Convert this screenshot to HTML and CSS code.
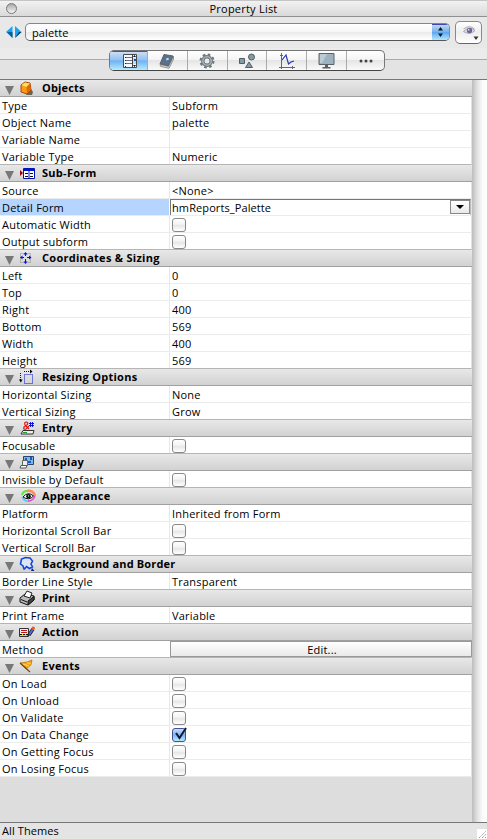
FILE: index.html
```html
<!DOCTYPE html>
<html lang="en">
<head>
<meta charset="utf-8">
<title>Property List</title>
<link rel="stylesheet" href="styles.css">
</head>
<body>
<header class="titlebar"><span class="close"></span><h1>Property List</h1></header>
<div class="selector">
  <svg class="arrows" width="16" height="12" viewBox="0 0 16 12"><path d="M6.500 0v12L0 6z" fill="#18a4f0"/><path d="M1 6h5.500v6z" fill="#075b96"/><path d="M9 0v12l6.500-6z" fill="#18a4f0"/><path d="M9 12l6.500-6H13z" fill="#063659"/></svg>
  <div class="popup"><span>palette</span><i><svg width="17" height="17" viewBox="0 0 17 17"><path d="M8.500 3l2.500 3.500H6zM8.500 13L6 9.500h5z" fill="#101820"/></svg></i></div>
  <div class="eye"><svg width="26" height="22" viewBox="0 0 26 22"><path d="M7.500 9.500q5.500-6 11.500-1-5 5-11.500 1" fill="#e8e6ec" stroke="#a5a1ad"/><circle cx="13.500" cy="8.500" r="2.700" fill="#6f6595"/><circle cx="12.700" cy="7.700" r=".9" fill="#ddd8ee"/><path d="M7.500 7q6-4.500 11 0" fill="none" stroke="#aaa"/><path d="M17.500 14.500h5l-2.500 3.500z" fill="#333"/></svg></div>
</div>
<nav class="tabs">
  <div class="segments">
    <span class="seg on"><svg width="16" height="16" viewBox="0 0 16 16"><path d="M1.500 1.500h13v13h-13z" fill="#f4f8ff" stroke="#4a4a4a"/><path d="M4 4.500h6M4 7.500h6M4 10.500h6" stroke="#6a7180"/><path d="M3 4h1v1H3zM3 7h1v1H3zM3 10h1v1H3zM3 13h1v1H3z" fill="#223"/><path d="M10.500 1v14" stroke="#444"/><path d="M11 5h3v6h-3z" fill="#b9dcff"/><path d="M12.500 2l1.500 2h-3zM12.500 14l1.500-2h-3z" fill="#111"/><path d="M12 6h2v2h-2z" fill="#17599c"/></svg></span>
    <span class="seg"><svg width="16" height="16" viewBox="0 0 16 16"><path d="M5 1.500l9 1.500-4.500 10L1 11z" fill="#58718d" stroke="#59616b"/><path d="M1 11.500l8.500 2L14.500 3.500v2.500L10 15.300l-8.500-2z" fill="#eee" stroke="#666" stroke-width=".7"/><path d="M7 5.500l2.300-.8.700 1.800-2.300 1z" fill="#cddded"/></svg></span>
    <span class="seg"><svg width="16" height="16" viewBox="0 0 16 16"><circle cx="8" cy="8" r="6.500" fill="none" stroke="#6e777b" stroke-width="2" stroke-dasharray="2.600 2.505"/><circle cx="8" cy="8" r="4.200" fill="none" stroke="#69757b" stroke-width="3.400"/><circle cx="8" cy="8" r="4.200" fill="none" stroke="#a7b1b5" stroke-width="1.600"/></svg></span>
    <span class="seg"><svg width="18" height="16" viewBox="0 0 18 16"><g fill="#829ba5" stroke="#555e63"><path d="M1.500 5.500h5v5h-5zM11 9l3.500 5.500h-7z"/><circle cx="13.500" cy="4" r="3"/></g></svg></span>
    <span class="seg"><svg width="16" height="16" viewBox="0 0 16 16"><path d="M2.500 0v16M0 14.500h16M1 2.500h3M13.500 13v3" fill="none" stroke="#666"/><path d="M3 7l4-5 2.500 9 2.500-2 3-1" fill="none" stroke="#2438b5" stroke-width="1.200"/></svg></span>
    <span class="seg"><svg width="17" height="17" viewBox="0 0 17 17"><path d="M1 1.500h15v11H1z" fill="#9db2bf" stroke="#5a6268"/><path d="M2 2h7l-5 9H2z" fill="#bcccd5"/><path d="M7 13h3v2h2.500v1.500h-8V15H7z" fill="#53606a"/></svg></span>
    <span class="seg"><svg width="14" height="4" viewBox="0 0 14 4"><g fill="#444"><circle cx="2" cy="2" r="1.500"/><circle cx="7" cy="2" r="1.500"/><circle cx="12" cy="2" r="1.500"/></g></svg></span>
  </div>
</nav>
<main class="panel">
<div class="list">
  <h2><b class="tri"></b><svg viewBox="0 0 16 16"><path d="M7 15l6 0 1-3-2-3z" fill="#665"/><path d="M2 5l4-3 5 1 1 7-4 4-6-2z" fill="#f99b13" stroke="#a84a08"/><path d="M2.500 5L6 2.500l5 1L7.500 7z" fill="#ffe05a"/><path d="M7.500 7L11 3.500l1 6L8 13.500z" fill="#e06a08"/></svg>Objects</h2>
  <div class="row"><span>Type</span><span>Subform</span></div>
  <div class="row"><span>Object Name</span><span>palette</span></div>
  <div class="row"><span>Variable Name</span><span></span></div>
  <div class="row"><span>Variable Type</span><span>Numeric</span></div>
  <h2><b class="tri"></b><svg viewBox="0 0 16 16"><path d="M1 5l3 3-3 3z" fill="#a00010"/><path d="M4.500 3.500h11v10h-11z" fill="#fff" stroke="#0014b8"/><path d="M5 4h10v2H5zM9.500 4h1v9h-1z" fill="#0014d0"/><path d="M6 8.500h3M6 11.500h3M11 8.500h3M11 11.500h3" stroke="#111"/></svg><em>Sub-Form</em></h2>
  <div class="row"><span>Source</span><span>&lt;None&gt;</span></div>
  <div class="row selected"><span>Detail Form</span><span class="combo">hmReports_Palette<i></i></span></div>
  <div class="row"><span>Automatic Width</span><span><i class="check"></i></span></div>
  <div class="row"><span>Output subform</span><span><i class="check"></i></span></div>
  <h2><b class="tri"></b><svg viewBox="0 0 16 16"><path d="M1.500 3.500h10v9h-10z" fill="none" stroke="#888" stroke-dasharray="1 1"/><path d="M6.500 3v3M6.500 9v4M2 7.500h3M8 7.500h4" stroke="#0010f0"/><path d="M6.500 2l2 2.500h-4zM6.500 14l2-2.500h-4zM1 7.500l2.500-2v4zM12.500 7.500l-2.500-2v4z" fill="#0010f0"/></svg><em>Coordinates &amp; Sizing</em></h2>
  <div class="row"><span>Left</span><span>0</span></div>
  <div class="row"><span>Top</span><span>0</span></div>
  <div class="row"><span>Right</span><span>400</span></div>
  <div class="row"><span>Bottom</span><span>569</span></div>
  <div class="row"><span>Width</span><span>400</span></div>
  <div class="row"><span>Height</span><span>569</span></div>
  <h2><b class="tri"></b><svg viewBox="0 0 16 16"><path d="M5.500 5.500h8v9h-8z" fill="none" stroke="#0010e0" stroke-dasharray="1 1"/><path d="M5 2.500h8" stroke="#111" stroke-dasharray="1 1"/><path d="M1.500 4v7" stroke="#111" stroke-dasharray="1 1"/><path d="M11 .5l2.500 2-2.500 2zM0 10.500h3.500l-1.700 3z" fill="#000"/></svg><em>Resizing Options</em></h2>
  <div class="row"><span>Horizontal Sizing</span><span>None</span></div>
  <div class="row"><span>Vertical Sizing</span><span>Grow</span></div>
  <h2><b class="tri"></b><svg viewBox="0 0 16 16"><path d="M4 10.500h11l-1 3.500H2z" fill="#eee" stroke="#333"/><path d="M4 12.500h4" stroke="#18a038"/><path d="M10 9L6 5q-1-3 1.300-3t1 2.700L5 7q-1 3 2 2l3-3" fill="none" stroke="#d51818" stroke-width="1.200"/><path d="M11.500 2v5M13.500 2v5M10 3.500h5M10 5.500h5" stroke="#1018d8"/></svg><em>Entry</em></h2>
  <div class="row"><span>Focusable</span><span><i class="check"></i></span></div>
  <h2><b class="tri"></b><svg viewBox="0 0 16 16"><path d="M4.500 2.500h10v8h-10z" fill="#79b9ee" stroke="#27456f"/><path d="M6 4h2v2H6zM11 3h2v3h-2zM9 7h3v2H9z" fill="#1c55c4"/><path d="M3.500 6.500h5v5h-5z" fill="#eee" stroke="#666"/><path d="M2 11.500h6l-1 2.500H1z" fill="#fff" stroke="#555"/></svg><em>Display</em></h2>
  <div class="row"><span>Invisible by Default</span><span><i class="check"></i></span></div>
  <h2><b class="tri"></b><svg class="wide" viewBox="0 0 16 16"><path d="M2 7Q3 3 7 3" fill="none" stroke="#60e440" stroke-width="2"/><path d="M7 3q6-1 8 5" fill="none" stroke="#ff8b55" stroke-width="2.500"/><path d="M2 9q3 5 7 4" fill="none" stroke="#58c8ff" stroke-width="1.500"/><path d="M8 13q5 0 7-5" fill="none" stroke="#ef43d4" stroke-width="1.500"/><path d="M3 9q5-6 10.500-1-4.500 5-10.500 1" fill="#fff" stroke="#111"/><circle cx="8.500" cy="8.300" r="2.300" fill="#111"/><path d="M8 7h1v2H8z" fill="#4da36b"/></svg><em>Appearance</em></h2>
  <div class="row"><span>Platform</span><span>Inherited from Form</span></div>
  <div class="row"><span>Horizontal Scroll Bar</span><span><i class="check"></i></span></div>
  <div class="row"><span>Vertical Scroll Bar</span><span><i class="check"></i></span></div>
  <h2><b class="tri"></b><svg viewBox="0 0 16 16"><path d="M5 13L4 10 1.500 8 2.500 3l4-1.500L11 2l2.500 3-1.500 3 1.500 3-3 1.500-3-2-2 2.500z" fill="#dce5f5" stroke="#1545dc" stroke-width="1.600"/><path d="M13 12l2.500 3H12z" fill="#0c2b80"/></svg>Background and Border</h2>
  <div class="row"><span>Border Line Style</span><span>Transparent</span></div>
  <h2><b class="tri"></b><svg viewBox="0 0 16 16"><path d="M1 8l5-4 9 2v4l-6 5-8-3z" fill="#bbb" stroke="#111"/><path d="M9 11l6-4.500v3.500l-6 5z" fill="#444" stroke="#111"/><path d="M5 6l3-5 5 2-2 5z" fill="#fff" stroke="#222"/><path d="M2 9.500l6 2.500" stroke="#111"/></svg>Print</h2>
  <div class="row"><span>Print Frame</span><span>Variable</span></div>
  <h2><b class="tri"></b><svg viewBox="0 0 16 16"><path d="M.5 4.500h9v8h-9z" fill="#eee" stroke="#333"/><path d="M2 6.500h6M2 8.500h6" stroke="#b91620"/><path d="M1 10h8v2H1z" fill="#f0d40c"/><path d="M1 10.500h8" stroke="#111" stroke-dasharray="2 1"/><path d="M10 11l4-6" stroke="#222" stroke-width="3.400"/><path d="M10.300 10.500l3.500-5.300" stroke="#4474ed" stroke-width="1.800"/><path d="M13.500 5.500l1.500-2.500" stroke="#ee5b17" stroke-width="3"/><path d="M8 13l1-3 2 1z" fill="#222"/></svg><em>Action</em></h2>
  <div class="row"><span>Method</span><span class="edit">Edit...</span></div>
  <h2><b class="tri"></b><svg viewBox="0 0 16 16"><path d="M1 5l7-1 5-2-1 5-5 4z" fill="#f9a414" stroke="#b86a08" stroke-width=".7"/><path d="M4 6l6 2M8 4.500l4 1.500" stroke="#ffdc50"/><path d="M1 5l10 9" stroke="#774407" stroke-width="1.200"/></svg><em>Events</em></h2>
  <div class="row"><span>On Load</span><span><i class="check"></i></span></div>
  <div class="row"><span>On Unload</span><span><i class="check"></i></span></div>
  <div class="row"><span>On Validate</span><span><i class="check"></i></span></div>
  <div class="row"><span>On Data Change</span><span><i class="check checked"><svg width="16" height="16" viewBox="0 0 16 16"><path d="M4 6l3.500 5L14 1" fill="none" stroke="#101832" stroke-width="2"/></svg></i></span></div>
  <div class="row"><span>On Getting Focus</span><span><i class="check"></i></span></div>
  <div class="row"><span>On Losing Focus</span><span><i class="check"></i></span></div>
</div>
<div class="scroll"></div>
</main>
<footer><span>All Themes</span><svg width="10" height="10" viewBox="0 0 10 10"><path d="M0 0h10v10H0z" fill="#fff"/><path d="M2 9l7-7M5 9l4-4M8 9l1-1" stroke="#999" stroke-dasharray="1.400 .6"/></svg></footer>
</body>
</html>
```
FILE: styles.css
```css
* { box-sizing: border-box; }
body { margin: 0; width: 487px; height: 839px; overflow: hidden; display: flex; flex-direction: column; background: #e8e8e8; color: #000; font: 11px/16px "Lucida Grande", "Open Sans", sans-serif; letter-spacing: .22px; }
svg { display: block; flex: none; }
em { font-style: normal; letter-spacing: .28px; }
.titlebar { position: relative; height: 17px; flex: none; background: linear-gradient(#f2f2f2, #d9d9d9); border-top: 1px solid #c5c5c5; border-bottom: 1px solid #8f8f8f; text-align: center; }
.titlebar h1 { margin: 0; font: inherit; line-height: 16px; }
.close { position: absolute; left: 6px; top: 2px; width: 11px; height: 11px; border: 1px solid #777; border-radius: 50%; background: linear-gradient(#aaa, #f5f5f5); }
.selector { height: 31px; flex: none; display: flex; align-items: flex-start; padding: 4px 4px 0 6px; }
.arrows { margin: 5px 3px 0 0; }
.popup { margin-top: 2px; width: 425px; height: 18px; display: flex; border: 1px solid #858585; border-bottom-color: #555; border-radius: 5px; overflow: hidden; background: linear-gradient(#fff 0%, #f7f7f7 48%, #e9e9e9 50%, #fff); padding-left: 6px; line-height: 18px; }
.popup span { flex: 1; letter-spacing: .1px; }
.popup i { width: 17px; background: linear-gradient(#c3ddf8, #79b3ef 48%, #5ba7f0 52%, #b4e6ff); box-shadow: inset 0 1px #4448a8; }
.eye { margin-left: 5px; width: 27px; height: 23px; border: 1px solid #888; border-bottom-color: #666; border-radius: 5px; background: linear-gradient(#fff, #eee 50%, #fff); }
.tabs { height: 32px; flex: none; display: flex; justify-content: center; padding: 2px 0 0 7px; border-bottom: 1px solid #777; background: linear-gradient(#ebebeb 11px, #aaa 11px, #aaa 12px, #e3e3e3 12px); }
.segments { width: 276px; height: 21px; display: flex; border: 1px solid #777; border-bottom-color: #444; border-radius: 5px; overflow: hidden; background: linear-gradient(#fff, #f4f4f4 47%, #e5e5e5 50%, #fafafa); }
.seg { width: 40px; display: flex; align-items: center; justify-content: center; border-left: 1px solid #aaa; }
.seg.on { width: 37px; padding-left: 4px; border-left: 0; background: linear-gradient(#d0e2f7, #92bff0 48%, #6db2f4 52%, #b7ebff); box-shadow: inset 0 1px #4a50b0; }
.seg:last-child { width: 38px; }
.panel { flex: 1; display: flex; min-height: 0; background: #ddd; }
.list { width: 472px; }
h2 { height: 17px; margin: 0; display: flex; align-items: center; padding-left: 5px; font-size: 11px; line-height: 16px; letter-spacing: .15px; background: linear-gradient(#e8e8e8, #d2d2d2); border-bottom: 1px solid #a0a0a0; }
h2 svg { width: 16px; height: 16px; margin: 0 7px 0 5px; }
h2 svg.wide { margin: 0 6px; }
.tri { width: 9px; height: 9px; margin-top: 5px; background: #777; clip-path: polygon(0 0, 100% 0, 50% 100%); }
.row { height: 17px; display: flex; background: #fff; border-bottom: 1px solid #ececec; border-right: 1px solid #e2e2e2; line-height: 17px; white-space: nowrap; }
.row:has(+ h2) { border-bottom-color: #b5b5b5; }
.row span { width: 302px; padding-left: 2px; border-left: 1px solid #e8e8e8; }
.row span:first-child { width: 169px; border-left: 0; }
.row.selected span:first-child { background: #b5d5ff; }
.row .combo { width: 301px; display: flex; justify-content: space-between; padding-left: 1px; margin-left: 1px; border: 1px solid #777; border-right-color: #bbb; border-bottom: 0; line-height: 16px; letter-spacing: .1px; }
.combo i { position: relative; width: 20px; height: 14px; border: 1px solid #888; background: linear-gradient(#fff, #e9e9e9); }
.combo i::after { content: ""; position: absolute; left: 5px; top: 4px; border: 4px solid transparent; border-top-color: #000; border-bottom: 0; }
.check { position: relative; display: block; width: 14px; height: 14px; margin-top: 2px; border: 1px solid #888; border-radius: 3px; background: linear-gradient(#fff, #f3f3f3 45%, #e5e5e5 50%, #fff); }
.checked { border-color: #484f95; background: linear-gradient(#c6ddfa, #7fb4ee 50%, #b8e8ff); }
.check svg { position: absolute; left: -1px; top: -2px; }
.row .edit { width: 302px; margin-left: 1px; margin-right: -1px; text-align: center; line-height: 16px; border: 1px solid #999; background: linear-gradient(#fff, #e9e9e9); }
.scroll { width: 15px; background: linear-gradient(90deg, #bcbcbc, #e2e2e2 35%, #fafafa 70%, #fff); }
footer { height: 17px; flex: none; display: flex; justify-content: space-between; align-items: flex-end; padding-left: 2px; border-top: 1px solid #777; background: #e4e4e4; letter-spacing: .1px; }
footer span { line-height: 17px; }
```
